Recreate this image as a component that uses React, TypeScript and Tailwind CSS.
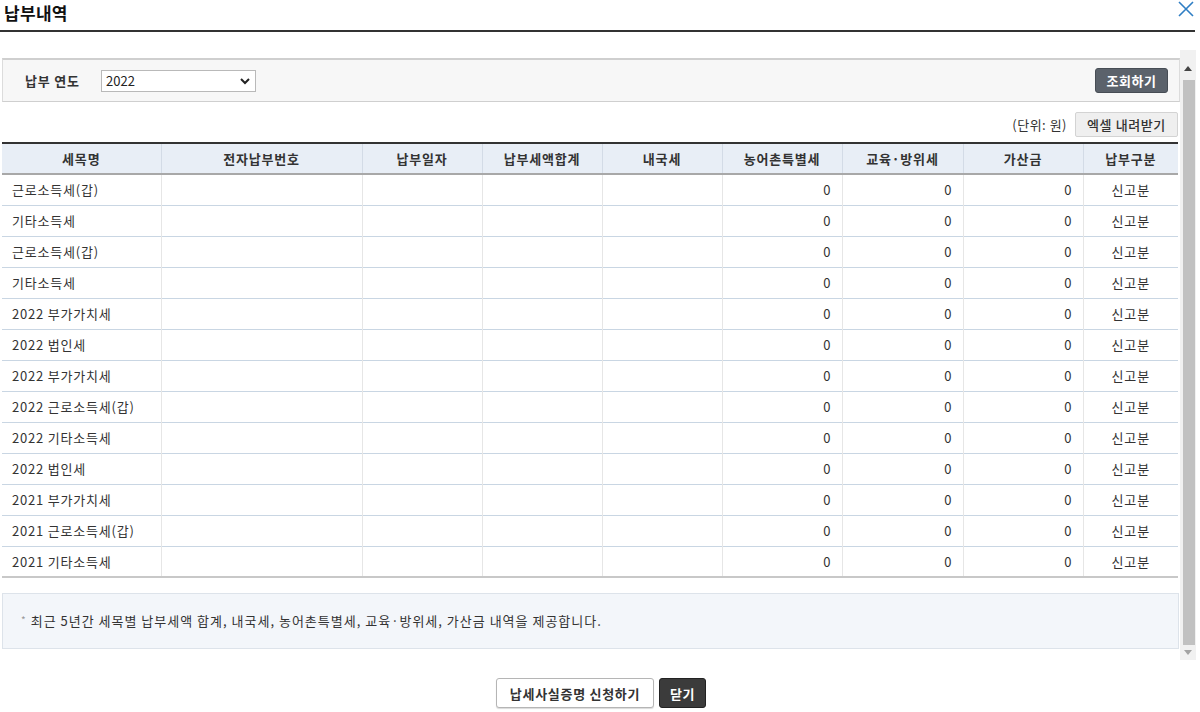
import React from 'react';

type Row = { name: string };

const rows: Row[] = [
  { name: '근로소득세(갑)' },
  { name: '기타소득세' },
  { name: '근로소득세(갑)' },
  { name: '기타소득세' },
  { name: '2022 부가가치세' },
  { name: '2022 법인세' },
  { name: '2022 부가가치세' },
  { name: '2022 근로소득세(갑)' },
  { name: '2022 기타소득세' },
  { name: '2022 법인세' },
  { name: '2021 부가가치세' },
  { name: '2021 근로소득세(갑)' },
  { name: '2021 기타소득세' },
];

const columns = [
  { label: '세목명', w: 'w-[159px]' },
  { label: '전자납부번호', w: 'w-[201px]' },
  { label: '납부일자', w: 'w-[120px]' },
  { label: '납부세액합계', w: 'w-[120px]' },
  { label: '내국세', w: 'w-[120px]' },
  { label: '농어촌특별세', w: 'w-[120px]' },
  { label: '교육·방위세', w: 'w-[121px]' },
  { label: '가산금', w: 'w-[120px]' },
  { label: '납부구분', w: 'w-[95px]' },
];

export default function App() {
  return (
    <div className="w-[1200px] h-[712px] bg-white text-[#333] text-[13px] overflow-hidden" style={{ fontFamily: '"Noto Sans CJK KR", "Noto Sans", sans-serif' }}>
      {/* Header */}
      <div className="flex items-center justify-between h-[32px] mr-[5px] border-b-2 border-[#333]">
        <h1 className="pl-[4px] text-[17px] font-bold text-[#111] leading-none -mt-[6px] tracking-[0.3px]">납부내역</h1>
        <svg width="16" height="16" viewBox="0 0 16 16" className="-mt-[12px] mr-[1px]">
          <path d="M1 1 L15 15 M15 1 L1 15" stroke="#2f7ec4" strokeWidth="1.6" fill="none" />
        </svg>
      </div>

      {/* Body with scroll area */}
      <div className="flex mt-[18px] h-[610px]">
        <div className="w-[1180px] pl-[2px] pt-[8px] flex flex-col">
          {/* Search box */}
          <div className="h-[44px] flex items-center justify-between border-t-2 border-[#666] border-b border-[#cfcfcf] bg-[#f7f7f7] border-x border-x-[#dcdcdc] px-[22px] pr-[11px]">
            <div className="flex items-center">
              <span className="font-bold text-[13px] text-[#333] w-[76px] tracking-[0.8px]">납부 연도</span>
              <div className="relative">
                <select className="appearance-none w-[155px] h-[22px] border border-[#b9b9b9] bg-white pl-[4px] text-[13px] text-[#222] outline-none" defaultValue="2022">
                  <option>2022</option>
                  <option>2021</option>
                  <option>2020</option>
                </select>
                <svg width="10" height="7" viewBox="0 0 10 7" className="absolute right-[6px] top-[8px] pointer-events-none">
                  <path d="M1 1 L5 5 L9 1" stroke="#222" strokeWidth="2" fill="none" />
                </svg>
              </div>
            </div>
            <button className="h-[25px] w-[73px] rounded-[3px] bg-[#5b626b] border border-[#474d55] text-white font-bold text-[13px] leading-none tracking-[0.6px]">조회하기</button>
          </div>

          {/* Unit row */}
          <div className="flex items-center justify-end h-[25px] mt-[10px] gap-[8px] pr-[2px]">
            <span className="text-[13px] text-[#333] tracking-[0.5px]">(단위: 원)</span>
            <button className="h-[25px] w-[103px] bg-[#efefef] border border-[#d3d3d3] rounded-[2px] text-[13px] text-[#333] font-medium leading-none tracking-[0.6px]">엑셀 내려받기</button>
          </div>

          {/* Table */}
          <table className="mt-[5px] w-[1176px] border-collapse table-fixed">
            <thead>
              <tr className="h-[31px] bg-[#e8eef6] border-t-2 border-[#333] border-b-2 border-b-[#a8a8a8]">
                {columns.map((c, i) => (
                  <th key={c.label} className={`${c.w} font-bold text-[13px] text-[#333] tracking-[0.8px] ${i > 0 ? 'border-l border-[#d3dbe6]' : ''}`}>
                    {c.label}
                  </th>
                ))}
              </tr>
            </thead>
            <tbody>
              {rows.map((r, idx) => (
                <tr key={idx} className={`h-[31px] border-b ${idx === rows.length - 1 ? 'border-b-2 border-[#c8c8c8]' : 'border-[#c9d6e3]'}`}>
                  <td className="pl-[10px] text-[13px] text-[#333] whitespace-nowrap tracking-[0.8px]">{r.name}</td>
                  <td className="border-l border-[#e6e6e6]"></td>
                  <td className="border-l border-[#e6e6e6]"></td>
                  <td className="border-l border-[#e6e6e6]"></td>
                  <td className="border-l border-[#e6e6e6]"></td>
                  <td className="border-l border-[#e6e6e6] text-right pr-[11px]">0</td>
                  <td className="border-l border-[#e6e6e6] text-right pr-[11px]">0</td>
                  <td className="border-l border-[#e6e6e6] text-right pr-[11px]">0</td>
                  <td className="border-l border-[#e6e6e6] text-center tracking-[0.8px]">신고분</td>
                </tr>
              ))}
            </tbody>
          </table>

          {/* Note */}
          <div className="mt-[15px] h-[56px] w-[1177px] bg-[#f3f6fa] border border-[#dde3ea] flex items-center pl-[18px]">
            <span className="text-[#999] text-[10px] mr-[5px] -mt-[4px]">*</span>
            <span className="text-[13px] text-[#333] tracking-[1px]">최근 5년간 세목별 납부세액 합계, 내국세, 농어촌특별세, 교육·방위세, 가산금 내역을 제공합니다.</span>
          </div>
        </div>

        {/* Fake scrollbar */}
        <div className="w-[16px] h-[610px] bg-[#f1f1f1] flex flex-col items-center">
          <div className="h-[30px] flex items-center justify-center pt-[6px]">
            <svg width="8" height="5" viewBox="0 0 8 5"><path d="M0 5 L4 0 L8 5 Z" fill="#444" /></svg>
          </div>
          <div className="w-[12px] h-[565px] bg-[#c1c1c1] ml-[1px]"></div>
          <div className="h-[15px] flex items-center justify-center">
            <svg width="8" height="5" viewBox="0 0 8 5"><path d="M0 0 L8 0 L4 5 Z" fill="#a3a3a3" /></svg>
          </div>
        </div>
      </div>

      {/* Bottom buttons */}
      <div className="flex justify-center gap-[5px] mt-[18px] ml-[2px]">
        <button className="h-[30px] w-[158px] bg-white border border-[#b5b5b5] rounded-[3px] shadow-[0_1px_1px_rgba(0,0,0,0.15)] font-bold text-[13px] text-[#333] leading-none tracking-[0.7px]">납세사실증명 신청하기</button>
        <button className="h-[30px] w-[47px] bg-[#3b3b3b] border border-[#222] rounded-[3px] text-white font-bold text-[13px] leading-none tracking-[0.6px]">닫기</button>
      </div>
    </div>
  );
}
